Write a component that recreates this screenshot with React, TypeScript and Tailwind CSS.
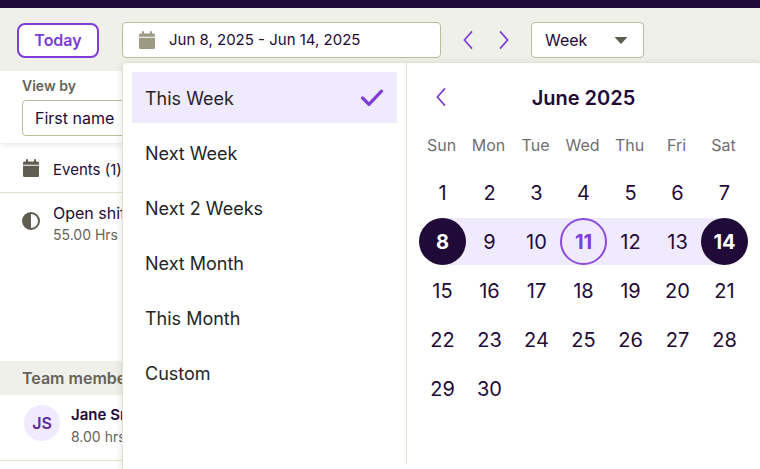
import React, { useState } from 'react';

const presets = ['This Week', 'Next Week', 'Next 2 Weeks', 'Next Month', 'This Month', 'Custom'];
const weekDays = ['Sun', 'Mon', 'Tue', 'Wed', 'Thu', 'Fri', 'Sat'];
const DAYS_IN_MONTH = 30;
const RANGE_START = 8;
const RANGE_END = 14;
const TODAY = 11;

// June 2025 starts on a Sunday, so there is no leading offset
const weeks = Array.from({ length: 5 }, (_, w) =>
  weekDays.map((_, d) => w * 7 + d + 1).filter(day => day <= DAYS_IN_MONTH)
);

const CalendarIcon = ({ className }: { className: string }) => (
  <svg viewBox="0 0 16 18" className={`w-4 h-[18px] shrink-0 ${className}`} fill="currentColor" aria-hidden="true">
    <path d="M3 1a1 1 0 0 1 2 0v1.500h6V1a1 1 0 0 1 2 0v1.500h1.500A1.500 1.500 0 0 1 16 4v1.800H0V4a1.500 1.500 0 0 1 1.500-1.500H3z" />
    <path d="M0 6.800h16v9.700a1.500 1.500 0 0 1-1.500 1.500h-13A1.500 1.500 0 0 1 0 16.500z" />
  </svg>
);

const Chevron = ({ direction }: { direction: 'left' | 'right' }) => (
  <svg viewBox="0 0 10 20" className="w-[10px] h-5" fill="none" stroke="#7e3cd8" strokeWidth="1.7" aria-hidden="true">
    <path d={direction === 'left' ? 'M9 1.400L1.400 10 9 18.600' : 'M1 1.400L8.600 10 1 18.600'} />
  </svg>
);

const dayClass = (day: number) => {
  if (day === RANGE_START || day === RANGE_END) return 'bg-[#1f0a38] text-white font-bold';
  if (day === TODAY) return 'border-2 border-[#8b4bdc] text-[#7e3cd8] font-bold';
  return '';
};

const rangeClass = (day: number) => {
  if (day === RANGE_START) return 'bg-linear-to-r from-transparent from-50% to-[#f0eaff] to-50%';
  if (day === RANGE_END) return 'bg-linear-to-l from-transparent from-50% to-[#f0eaff] to-50%';
  if (day > RANGE_START && day < RANGE_END) return 'bg-[#f0eaff]';
  return '';
};

const DateMenu = () => {
  const [preset, setPreset] = useState('This Week');

  return (
    <div className="absolute left-0 top-full z-10 mt-1 flex h-[440px] w-[640px] items-start rounded border border-[#e3e2d2] bg-white shadow-[0_2px_8px_rgba(0,0,0,0.12)]">
      <ul className="flex h-[401px] w-[284px] shrink-0 flex-col gap-1 border-r border-[#e3e2d2] p-[9px]">
        {presets.map(name => (
          <li key={name}>
            <button
              onClick={() => setPreset(name)}
              className={`flex h-[51px] w-full items-center justify-between px-[13px] text-left text-lg text-[#252525] ${
                name === preset ? 'bg-[#f0eaff]' : ''
              }`}
            >
              <span className="pt-0.5">{name}</span>
              {name === preset && (
                <svg viewBox="0 0 24 18" className="h-[18px] w-6" fill="none" stroke="#7e3cd8" strokeWidth="3.2" strokeLinecap="round" strokeLinejoin="round" aria-hidden="true">
                  <path d="M2.600 9l6.400 6.400L21.500 2.200" />
                </svg>
              )}
            </button>
          </li>
        ))}
      </ul>

      <div className="px-3 pt-3">
        <div className="flex h-11 items-center">
          <button aria-label="Previous month" className="flex w-11 justify-center">
            <Chevron direction="left" />
          </button>
          <h2 className="flex-1 pt-0.5 text-center text-xl font-semibold">June 2025</h2>
          <div className="w-11" />
        </div>
        <table className="border-collapse text-center">
          <thead>
            <tr className="h-[49px]">
              {weekDays.map(d => (
                <th key={d} className="w-[47px] p-0 pt-0.5 pr-0.5 text-center text-base font-normal text-[#6f6f6f]">{d}</th>
              ))}
            </tr>
          </thead>
          <tbody>
            {weeks.map(week => (
              <tr key={week[0]}>
                {week.map(day => (
                  <td key={day} className="px-0 py-px">
                    <div className={rangeClass(day)}>
                      <button className={`flex size-[47px] items-center justify-center rounded-full text-xl ${dayClass(day)}`}>
                        {day}
                      </button>
                    </div>
                  </td>
                ))}
              </tr>
            ))}
          </tbody>
        </table>
      </div>
    </div>
  );
};

export default function App() {
  return (
    <div className="h-screen overflow-hidden bg-white font-['Inter',sans-serif] text-[#1f0a38]">
      <div className="h-2 bg-[#1f0a38]" />

      <header className="relative z-10 flex items-center bg-[#f0f0eb] pt-[14px] pb-[13px] pl-[17px]">
        <button className="h-[35px] w-[82px] rounded-lg border-2 border-[#7e3cd8] bg-white text-base font-semibold text-[#7e3cd8]">
          Today
        </button>

        <div className="relative ml-[23px]">
          <button className="flex h-9 w-[319px] items-center gap-[14px] rounded border border-[#bdbb98] bg-white pl-4 text-[15px]">
            <CalendarIcon className="text-[#9d9a83]" />
            Jun 8, 2025 - Jun 14, 2025
          </button>
          <DateMenu />
        </div>

        <button aria-label="Previous week" className="ml-[22px]">
          <Chevron direction="left" />
        </button>
        <button aria-label="Next week" className="ml-[26px]">
          <Chevron direction="right" />
        </button>

        <div className="relative ml-[22px]">
          <select aria-label="Period" className="block h-9 w-[113px] appearance-none rounded border border-[#bdbb98] bg-white pl-[13px] text-base">
            <option>Week</option>
            <option>Month</option>
          </select>
          <svg viewBox="0 0 14 7" className="pointer-events-none absolute right-4 top-[15px] h-[7px] w-[14px]" fill="#5f5d50" aria-hidden="true">
            <path d="M.5 0h13L7 7z" />
          </svg>
        </div>
      </header>

      <main>
        <div className="h-[72px] px-[22px] pt-[5px] shadow-[0_1px_6px_rgba(0,0,0,0.12)]">
          <label htmlFor="view-by" className="block h-6 text-sm leading-5 font-semibold text-[#65635a]">View by</label>
          <select id="view-by" className="block h-9 w-[220px] appearance-none rounded border border-[#bdbb98] bg-white pl-3 text-base">
            <option>First name</option>
            <option>Last name</option>
          </select>
        </div>

        <div className="flex h-[50px] items-center gap-[14px] border-b border-[#e3e2d2] px-[23px]">
          <CalendarIcon className="text-[#5f5d50]" />
          <span className="pt-1 text-[15px] leading-6">Events (1)</span>
        </div>

        <div className="flex h-[168px] items-start gap-[13px] px-[22px] pt-2">
          <svg viewBox="0 0 18 18" className="mt-[11px] size-[18px] shrink-0" aria-hidden="true">
            <circle cx="9" cy="9" r="8" fill="none" stroke="#5f5d50" strokeWidth="2" />
            <path d="M9 1a8 8 0 0 0 0 16z" fill="#5f5d50" />
          </svg>
          <div>
            <div className="text-base leading-6">Open shifts</div>
            <div className="text-sm leading-5 text-[#65635a]">55.00 Hrs</div>
          </div>
        </div>

        <h3 className="h-[34px] bg-[#f0f0eb] px-[22px] text-base leading-[34px] font-semibold text-[#65635a]">Team members</h3>

        <div className="flex h-[66px] items-start gap-[11px] border-b border-[#e3e2d2] px-6 pt-2">
          <div className="mt-[2px] flex size-9 shrink-0 items-center justify-center rounded-full bg-[#f0eaff] text-base font-semibold text-[#5b2a9d]">
            JS
          </div>
          <div>
            <div className="text-[15px] leading-6 font-semibold">Jane Smith</div>
            <div className="text-sm leading-5 text-[#65635a]">8.00 hrs</div>
          </div>
        </div>
      </main>
    </div>
  );
}
